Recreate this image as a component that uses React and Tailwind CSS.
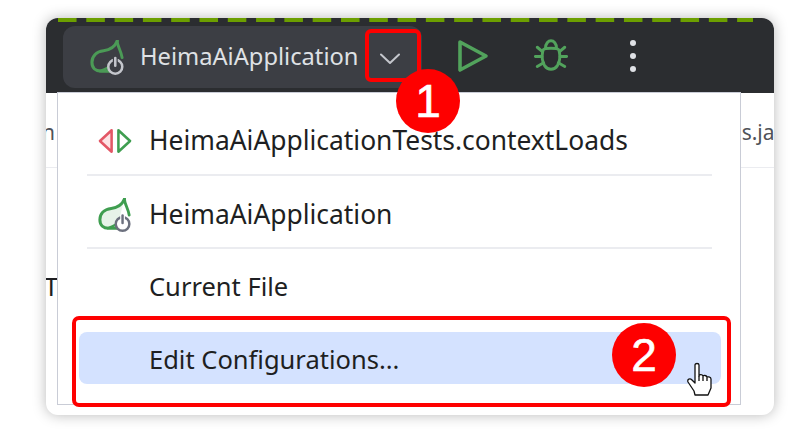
import React from "react";

function Leaf({ stroke, fill, power, disc, className }) {
  return (
    <svg viewBox="0 0 36 36" className={className} fill="none">
      <path d="M28 1 C26 6 22 10 14 11 C6 12 2 17 2 23 C2 29 6 32 11 32 L20 32" stroke={stroke} strokeWidth="3.2" strokeLinecap="round" strokeLinejoin="round" fill={fill} />
      <path d="M28 1 C28 6 32 11 33 18" stroke={stroke} strokeWidth="3" strokeLinecap="round" />
      <path d="M10 32 C13 31 16 30 19 28" stroke={stroke} strokeWidth="2.4" strokeLinecap="round" />
      <circle cx="26" cy="27.5" r="7.2" stroke={power} strokeWidth="2.6" fill={disc} />
      <path d="M26 18.5 V26" stroke={disc} strokeWidth="5" />
      <path d="M26 18.5 V26.5" stroke={power} strokeWidth="2.6" strokeLinecap="round" />
    </svg>
  );
}

function Badge({ children, className }) {
  return (
    <div className={`absolute w-[64px] h-[64px] rounded-full bg-[#fe0000] text-white flex items-center justify-center text-[46px] [-webkit-text-stroke:0.6px_white] font-['Liberation_Sans',sans-serif] leading-none ${className}`}>
      {children}
    </div>
  );
}

function Row({ icon, children, className = "" }) {
  return (
    <div className={`flex items-center text-[#1e1f22] ${className}`}>
      <div className="w-[91px] pl-[40px] flex items-center shrink-0">{icon}</div>
      <span>{children}</span>
    </div>
  );
}

export default function App() {
  return (
    <div className="relative w-[804px] h-[429px] bg-white pt-[18px] pl-[46px] overflow-hidden font-['Noto_Sans',sans-serif]">
      <div className="relative w-[728px] h-[397px] rounded-[12px] bg-white overflow-hidden shadow-[0_0_14px_rgba(0,0,0,0.28)]">
        <header className="relative h-[75px] bg-[#2b2d30] pt-[8px] pl-[17px] flex items-start">
          <div className="absolute top-0 left-0 right-[21px] h-[4px] bg-[linear-gradient(90deg,#6c9f00_0_19px,transparent_19px)] bg-[length:28.3px_100%] bg-[position:12px_0]" />
          <div className="w-[359px] h-[62px] rounded-[12px] bg-[#3c3e44] flex items-center pl-[27px]">
            <Leaf stroke="#4b9a56" fill="none" power="#c4c6cc" disc="#3c3e44" className="w-[35px] h-[35px]" />
            <span className="ml-[15px] text-[23.7px] text-[#dfe1e5] mt-[-1px] whitespace-nowrap">HeimaAiApplication</span>
            <svg viewBox="0 0 20 12" className="w-[20px] h-[12px] ml-[21px] mt-[4px] shrink-0" fill="none">
              <path d="M1 1.5 L10 10 L19 1.5" stroke="#c4c6cc" strokeWidth="2" strokeLinecap="round" strokeLinejoin="round" />
            </svg>
          </div>
          <svg viewBox="0 0 32 34" className="ml-[35px] mt-[13px] w-[32px] h-[34px]" fill="none">
            <path d="M3 3 L29 17 L3 31 Z" stroke="#52a35c" strokeWidth="3.6" strokeLinejoin="round" />
          </svg>
          <svg viewBox="0 0 38 36" className="ml-[44px] mt-[13px] w-[36px] h-[33px]" fill="none" stroke="#52a35c" strokeWidth="3.2" strokeLinecap="round" strokeLinejoin="round">
            <path d="M10 13 C10 11 13 10 19 10 C25 10 28 11 28 13 C29 18 29 24 26 29 C24 32 21 33 19 33 C17 33 14 32 12 29 C9 24 9 18 10 13 Z" />
            <path d="M13 10 C13 5 16 2 19 2 C22 2 25 5 25 10" />
            <path d="M2 19 H9 M29 19 H36 M4 9 L10 14 M34 9 L28 14 M4 30 L11 26 M34 30 L27 26" />
          </svg>
          <div className="ml-[61px] mt-[14px] flex flex-col gap-[7px]">
            <div className="w-[6px] h-[6px] rounded-full bg-[#dfe1e5]" />
            <div className="w-[6px] h-[6px] rounded-full bg-[#dfe1e5]" />
            <div className="w-[6px] h-[6px] rounded-full bg-[#dfe1e5]" />
          </div>
        </header>
        <div className="h-[75px] border-b border-[#ebecf0] flex items-center justify-between text-[21px] text-[#4f5258] pt-[5px] whitespace-nowrap">
          <span className="-ml-[4px]">n</span>
          <span className="-mr-[23px]">s.java</span>
        </div>
        <div className="pt-[100px] -ml-[2px] text-[26px] text-[#1e1f22] leading-[36px]">T</div>
      </div>

      {/* dropdown */}
      <div className="absolute left-[57px] top-[92px] w-[684px] h-[313px] bg-white border border-[#c9ccd6] pt-[30px] flex flex-col">
        <Row className="h-[36px] text-[26.4px] whitespace-nowrap" icon={
          <svg viewBox="0 0 36 26" className="w-[35px] h-[26px]" fill="none" strokeWidth="2.6" strokeLinejoin="round">
            <path d="M14 2 L2 13 L14 24 Z" stroke="#e35766" fill="#fde3e5" />
            <path d="M21 2 L33 13 L21 24 Z" stroke="#3f9e50" fill="#ffffff" />
          </svg>
        }>HeimaAiApplicationTests.contextLoads</Row>
        <div className="mx-[29px] mt-[15px] h-[2px] w-[625px] bg-[#ebecf0]" />
        <Row className="h-[36px] mt-[21px] text-[26.4px]" icon={<Leaf stroke="#3f9e50" fill="#e6f3e8" power="#6c707e" disc="#ffffff" className="w-[34px] h-[34px]" />}>HeimaAiApplication</Row>
        <div className="mx-[29px] mt-[14px] h-[2px] w-[625px] bg-[#ebecf0]" />
        <Row className="h-[36px] mt-[19px] text-[25.5px]" icon={null}>Current File</Row>
        <div className="mt-[28px] ml-[21px] w-[642px] h-[52px] rounded-[8px] bg-[#d4e2ff] pt-[1px]">
          <Row className="h-[52px] -ml-[21px] text-[25.5px]" icon={null}>Edit Configurations...</Row>
        </div>
      </div>

      {/* annotations */}
      <div className="absolute left-[365px] top-[29px] w-[56px] h-[53px] border-[4px] border-[#fe0000] rounded-[6px]" />
      <div className="absolute left-[72px] top-[316px] w-[659px] h-[91px] border-[4px] border-[#fe0000] rounded-[7px]" />
      <Badge className="left-[396px] top-[69px]">1</Badge>
      <Badge className="left-[612px] top-[323px]">2</Badge>
      <svg viewBox="0 0 26 36" className="absolute left-[687px] top-[362px] w-[26px] h-[36px]" fill="#ffffff" stroke="#111111" strokeWidth="1.3" strokeLinejoin="round">
        <path d="M8 3 C8 1 12 1 12 3 L12 14 C12 12 16 12 16 14.5 C16 13 20 13 20 15.5 C20 14.5 24 14.5 24 17 L24 26 L21 33 L8 33 L7 29 L1 20 C0 17 3 16 5 18 L8 21 Z" />
        <path d="M12 14 V19 M16 15 V19 M20 16 V19" />
      </svg>
    </div>
  );
}
